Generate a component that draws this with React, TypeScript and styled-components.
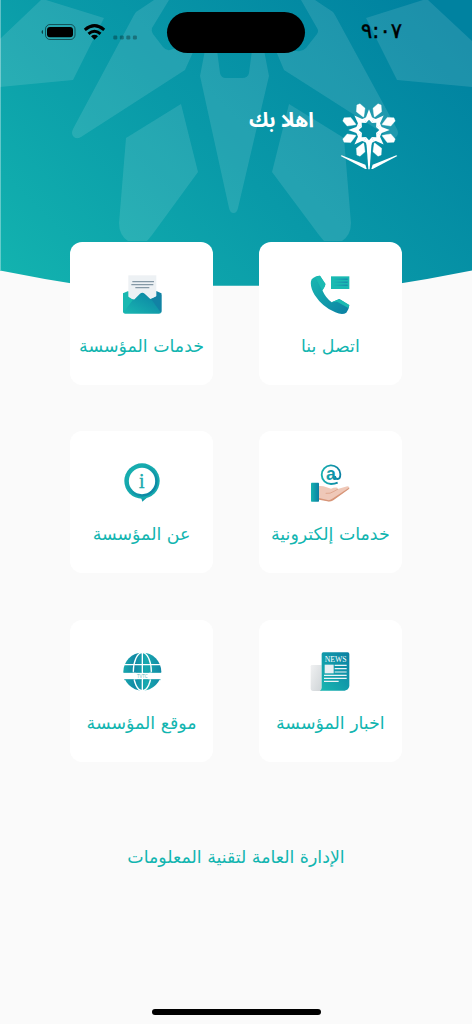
import React from "react";
import styled, { createGlobalStyle } from "styled-components";

const GlobalStyle = createGlobalStyle`
  body {
    margin: 0;
    background: #fafafa;
    font-family: "DejaVu Sans", sans-serif;
  }
`;

const Screen = styled.main`
  position: relative;
  box-sizing: border-box;
  display: flex;
  flex-direction: column;
  width: 472px;
  height: 1024px;
  overflow: hidden;
`;

const HeroBackground = styled.svg`
  position: absolute;
  top: 0;
  left: 0;
  z-index: -1;
`;

const StatusBar = styled.div`
  display: flex;
  align-items: flex-start;
  height: 92px;
  box-sizing: border-box;
  padding: 12px 70px 0 41px;
`;

const StatusIcons = styled.svg`
  flex: none;
  margin-top: 10px;
`;

const Island = styled.div`
  width: 138px;
  height: 41px;
  margin-left: 28px;
  border-radius: 21px;
  background: #000;
`;

const Time = styled.time`
  margin-left: auto;
  margin-top: 5px;
  font-size: 21px;
  line-height: 28px;
  letter-spacing: -2.6px;
  color: #000;
  -webkit-text-stroke: 0.4px #000;
  unicode-bidi: bidi-override;
`;

const Header = styled.header`
  display: flex;
  align-items: flex-start;
  gap: 26px;
  height: 150px;
  box-sizing: border-box;
  padding: 11px 74px 0 0;
`;

const Greeting = styled.h1`
  margin: 0;
  font-family: "Noto Sans Arabic", "Noto Sans", sans-serif;
  font-size: 20.7px;
  line-height: 36px;
  font-weight: 700;
  color: #fff;
`;

const Services = styled.nav`
  display: grid;
  grid-template-columns: repeat(2, 142.5px);
  grid-auto-rows: 142.5px;
  gap: 46.3px;
  padding: 0 70.4px;
`;

const Card = styled.a`
  display: flex;
  flex-direction: column;
  align-items: center;
  box-sizing: border-box;
  padding-top: 32.5px;
  border-radius: 12px;
  background: #fff;
  color: #12b5b0;
  text-decoration: none;
`;

const Label = styled.span`
  margin-top: 16px;
  font-size: 17.4px;
  line-height: 30px;
  white-space: nowrap;
`;

const Footer = styled.footer`
  margin-top: 80px;
  text-align: center;
  color: #12b5b0;
`;

const HomeIndicator = styled.div`
  width: 169px;
  height: 6px;
  margin: auto auto 9px;
  border-radius: 3px;
  background: #000;
`;

function Hero() {
  return (
    <HeroBackground width="472" height="290" viewBox="0 0 472 290">
      <defs>
        <linearGradient
          id="hero"
          gradientUnits="userSpaceOnUse"
          x1="50"
          y1="330"
          x2="400"
          y2="-20"
        >
          <stop offset="0" stopColor="#13b3af" />
          <stop offset="0.5" stopColor="#0999a8" />
          <stop offset="1" stopColor="#0082a0" />
        </linearGradient>
      </defs>
      <path
        d="M0 0H472V270.5Q430 279 386 285.7H86Q42 279 0 270.5Z"
        fill="url(#hero)"
      />
      <g fill="#fff" fillOpacity="0.115">
        <path d="M0 39L41 0H46L104 18L73 80L0 87Z" />
        <path d="M472 41L428 0H423L366 18L397 80L472 87Z" />
        <path d="M169 0L152 28Q151 31 153 34L163 47Q167 52 173 49L194 50L185 70L81 137Q76 140 73 136Q71 133 73 129L134 15L136 12L154 0Z" />
        <path d="M301 0L317 28Q319 31 317 34L306 48Q302 52 297 51L276 51L284 70L389 137Q394 140 397 136Q399 133 397 129L335 15L333 12L315 0Z" />
        <path d="M205 50L200 76L229 208Q230 213 233.5 213Q237 213 238 208L269 76L264 50H252L249 73Q248 78 242 78H226Q221 78 220 73L217 50Z" />
        <path d="M181 104L126 138L119 223Q119 235 128 241H147L152 235L198 172Z" />
        <path d="M289 104L344 138L351 223Q351 235 342 241H324L319 235L272 172Z" />
      </g>
      <rect width="1" height="270" fill="#fff" fillOpacity="0.35" />
    </HeroBackground>
  );
}

const SPIKES = [0, 45, 90, 135, 180, 225, 270, 315];

function Logo() {
  return (
    <svg width="58" height="68" viewBox="29 26 174 204" fill="#fff">
      <g transform="translate(116 107)">
        {SPIKES.map((angle) => (
          <g key={angle} transform={`rotate(${angle})`}>
            <path d="M0 -62L9 -38L15 -35L9 -21L0 -31L-9 -21L-15 -35L-9 -38Z" />
            <path
              transform="rotate(22.5)"
              d="M-5 -83H5L14 -65L1 -43H-1L-14 -65Z"
              stroke="#fff"
              strokeLinejoin="round"
            />
          </g>
        ))}
      </g>
      <path d="M108 142H124L118 225H114Z" />
      <path d="M31 185L34 183L105 211L109 224L105 224Z" />
      <path d="M201 185L198 183L127 211L123 224L127 224Z" />
    </svg>
  );
}

function Gradient({ id, flip }: { id: string; flip?: boolean }) {
  return (
    <linearGradient id={id} x1="0" y1={flip ? 1 : 0} x2="1" y2={flip ? 0 : 1}>
      <stop offset="0" stopColor="#19b8b1" />
      <stop offset="1" stopColor="#0b7fa3" />
    </linearGradient>
  );
}

function PhoneIcon() {
  return (
    <svg width="40" height="40" viewBox="181 118 120 120">
      <defs>
        <Gradient id="phone" />
        <linearGradient id="msg">
          <stop offset="0" stopColor="#19b8b1" />
          <stop offset="1" stopColor="#1677a8" />
        </linearGradient>
      </defs>
      <path
        d="M186 131Q198 119 211 120L227 145Q228 150 218 164Q228 187 246 200L269 190L299 209Q298 222 290 231Q278 239 257 230Q219 215 195 178Q181 154 184 137Z"
        fill="url(#phone)"
      />
      <path d="M197 124L211 120L227 144Q228 149 218 165Z" fill="#1bbab2" />
      <path d="M246 200L269 190L299 208L296 217L262 198Z" fill="#1bbab2" />
      <path d="M244 122H299V160H244Z" fill="#19bab2" />
      <g fill="url(#msg)">
        <rect x="252" y="129" width="42" height="3" />
        <rect x="252" y="138" width="42" height="3" />
        <rect x="252" y="147" width="42" height="3" />
      </g>
    </svg>
  );
}

function MailIcon() {
  return (
    <svg width="40" height="40" viewBox="185 119 120 120">
      <defs>
        <Gradient id="mail" flip />
      </defs>
      <path d="M188 174L204 167L222 190L188 232Z" fill="#19b8b1" />
      <path d="M303 174L288 167L270 190L303 232Z" fill="#1282a4" />
      <path d="M204 120H288V192H204Z" fill="#edf1f4" />
      <g stroke="#8599a6" strokeWidth="4">
        <path d="M216 139H281M213 148H279M225 157H267" />
      </g>
      <path
        d="M188 178L217 193Q222 194 227 187L239 175Q246 170 253 175L270 191L303 178V229Q302 235 296 235H194Q188 235 188 228Z"
        fill="url(#mail)"
      />
      <path d="M188 174L218 193L190 231L188 228Z" fill="#19b8b1" />
      <path d="M303 174L273 192L301 231L303 228Z" fill="#1282a4" />
    </svg>
  );
}

function HandIcon() {
  return (
    <svg width="40" height="40" viewBox="181 115 120 120">
      <defs>
        <linearGradient id="at" gradientUnits="userSpaceOnUse" x1="212" x2="276">
          <stop offset="0" stopColor="#17b3b0" />
          <stop offset="1" stopColor="#0b7fa3" />
        </linearGradient>
        <linearGradient id="cuff">
          <stop offset="0" stopColor="#17b3b0" />
          <stop offset="1" stopColor="#0b7fa3" />
        </linearGradient>
      </defs>
      <path
        d="M264 174Q255 178 244 178A28 28 0 1 1 272 148Q272 163 264 163Q256 163 256 154"
        fill="none"
        stroke="url(#at)"
        strokeWidth="5.500"
      />
      <text
        x="244"
        y="165"
        textAnchor="middle"
        fontFamily="Liberation Sans, sans-serif"
        fontSize="53"
        fontWeight="700"
        fill="url(#at)"
      >
        a
      </text>
      <path
        d="M208 184Q219 183 231 188L244 192Q253 188 263 189L264 193L293 185Q300 186 299 190L250 226Q241 232 233 229L208 222Z"
        fill="#efc8b8"
      />
      <path
        d="M208 220L234 226Q242 228 250 221L298 189Q301 191 297 194L251 227Q242 232 233 230L208 225Z"
        fill="#d79578"
      />
      <path
        d="M228 206Q242 208 253 200L265 193"
        fill="none"
        stroke="#d79578"
        strokeWidth="2"
      />
      <rect x="184" y="174" width="24" height="57" rx="2" fill="url(#cuff)" />
    </svg>
  );
}

function InfoIcon() {
  return (
    <svg width="40" height="40" viewBox="185 115 120 120">
      <defs>
        <Gradient id="infoRing" />
      </defs>
      <path d="M242 218L262 218Q254 224 246 231Z" fill="#159dab" />
      <circle cx="245" cy="169" r="53" fill="#16aaae" />
      <circle cx="245" cy="169" r="43" fill="none" stroke="url(#infoRing)" strokeWidth="8" />
      <circle cx="245" cy="169" r="39.500" fill="#fff" />
      <text
        x="244.500"
        y="191"
        textAnchor="middle"
        fontFamily="Liberation Serif, serif"
        fontSize="60"
        fill="#18aaae"
        stroke="#18aaae"
      >
        i
      </text>
    </svg>
  );
}

function NewsIcon() {
  return (
    <svg width="40" height="40" viewBox="181 111 120 120">
      <defs>
        <Gradient id="news" flip />
        <linearGradient id="paper" x1="0" y1="0" x2="1" y2="1">
          <stop offset="0" stopColor="#f0f1f2" />
          <stop offset="1" stopColor="#cfd4d7" />
        </linearGradient>
      </defs>
      <path d="M187 150H216V228H189Q183 227 183 221V154Q183 150 187 150Z" fill="url(#paper)" />
      <path
        d="M221 112H294Q299 112 299 117V213Q297 225 285 227H211Q216 224 216 218V117Q216 112 221 112Z"
        fill="url(#news)"
      />
      <text
        x="258"
        y="140"
        textAnchor="middle"
        textLength="66"
        lengthAdjust="spacingAndGlyphs"
        fontFamily="Liberation Serif, serif"
        fontSize="24"
        fill="#fff"
      >
        NEWS
      </text>
      <rect x="225" y="149" width="27" height="26" fill="#e9eff2" />
      <path
        d="M255 151H291M255 161H291M255 171H291M223 181H291M223 190H291M223 199H267"
        stroke="#eef4f6"
        strokeWidth="3.500"
      />
    </svg>
  );
}

function GlobeIcon() {
  return (
    <svg width="40" height="40" viewBox="185 111 120 120">
      <defs>
        <linearGradient id="globe">
          <stop offset="0" stopColor="#19a9ae" />
          <stop offset="0.300" stopColor="#1289a5" />
          <stop offset="0.600" stopColor="#18aab0" />
          <stop offset="1" stopColor="#1287a5" />
        </linearGradient>
      </defs>
      <circle cx="246" cy="170" r="57" fill="url(#globe)" />
      <g fill="none" stroke="#fff" strokeWidth="4">
        <path d="M246 111V229M187 149H305" />
        <ellipse cx="246" cy="170" rx="27" ry="57" />
      </g>
      <rect x="185" y="173" width="122" height="20" fill="#fff" />
      <path
        d="M190 172H221M227 172H244M249 172H266M271 172H302M191 194H222M229 194H244M249 194H264M270 194H301"
        stroke="#189fac"
        strokeWidth="2"
      />
      <text
        x="246"
        y="189"
        textAnchor="middle"
        textLength="32"
        fontFamily="Open Sans, sans-serif"
        fontSize="14"
        fill="#5fb9bd"
      >
        TVTC
      </text>
    </svg>
  );
}

const services = [
  { label: "اتصل بنا", icon: <PhoneIcon /> },
  { label: "خدمات المؤسسة", icon: <MailIcon /> },
  { label: "خدمات إلكترونية", icon: <HandIcon /> },
  { label: "عن المؤسسة", icon: <InfoIcon /> },
  { label: "اخبار المؤسسة", icon: <NewsIcon /> },
  { label: "موقع المؤسسة", icon: <GlobeIcon /> },
];

export default function App() {
  return (
    <Screen>
      <GlobalStyle />
      <Hero />
      <StatusBar>
        <StatusIcons width="98" height="20" viewBox="41 22 98 20">
          <rect x="45.500" y="24.500" width="29.500" height="15" rx="4.500" fill="none" stroke="#000" strokeOpacity="0.5" />
          <rect x="47" y="27" width="26" height="10.200" rx="3" />
          <path d="M43 30V34Q41.500 33.500 41.500 32Q41.500 30.500 43 30Z" fillOpacity="0.6" />
          <g fill="none" stroke="#000" strokeWidth="3">
            <path d="M84.800 29.800Q94.500 21.500 104.200 29.800" />
            <path d="M88.500 33.800Q94.500 28.800 100.500 33.800" />
          </g>
          <path d="M91 36.200Q94.500 33.500 98 36.200L94.500 39.700Z" />
          <g fillOpacity="0.3">
            <rect x="113.300" y="35.500" width="4" height="4" rx="1.200" />
            <rect x="119.800" y="35.500" width="4" height="4" rx="1.200" />
            <rect x="126.300" y="35.500" width="4" height="4" rx="1.200" />
            <rect x="132.900" y="35.500" width="4" height="4" rx="1.200" />
          </g>
        </StatusIcons>
        <Island />
        <Time>٩:٠٧</Time>
      </StatusBar>
      <Header dir="rtl">
        <Logo />
        <Greeting>اهلا بك</Greeting>
      </Header>
      <Services dir="rtl">
        {services.map((service) => (
          <Card key={service.label}>
            {service.icon}
            <Label>{service.label}</Label>
          </Card>
        ))}
      </Services>
      <Footer dir="rtl">
        <Label>الإدارة العامة لتقنية المعلومات</Label>
      </Footer>
      <HomeIndicator />
    </Screen>
  );
}
